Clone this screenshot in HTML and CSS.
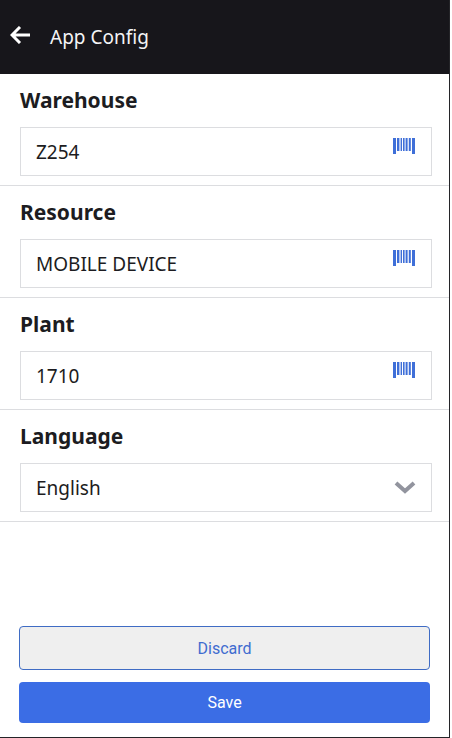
FILE: index.html
```html
<!DOCTYPE html>
<html lang="en">

<head>
    <meta charset="UTF-8">
    <meta name="viewport" content="width=device-width, initial-scale=1.0">
    <title>App Config</title>
    <link rel="stylesheet" href="styles.css">
</head>

<body>
    <div class="screen">
        <header class="topbar">
            <button class="icon-btn" type="button" aria-label="Back">
                <svg width="20" height="18" viewBox="0 0 20 18">
                    <path d="M20 9H2M10 1L2 9l8 8" />
                </svg>
            </button>
            <h1>App Config</h1>
        </header>

        <form class="config">
            <div class="field">
                <label for="warehouse">Warehouse</label>
                <div class="box">
                    <input id="warehouse" type="text" value="Z254">
                    <button class="icon-btn scan" type="button" aria-label="Scan warehouse">
                        <svg width="22" height="16" viewBox="0 0 22 16">
                            <path d="M0 0h3v16H0zM4 0h2.4v13H4zM7.6 0h1.4v13H7.6zM10 0h1.6v13H10zM12.6 0h2v13h-2zM15.8 0h2v13h-2zM19 0h3v16h-3z" />
                        </svg>
                    </button>
                </div>
            </div>

            <div class="field">
                <label for="resource">Resource</label>
                <div class="box">
                    <input id="resource" type="text" value="MOBILE DEVICE">
                    <button class="icon-btn scan" type="button" aria-label="Scan resource">
                        <svg width="22" height="16" viewBox="0 0 22 16">
                            <path d="M0 0h3v16H0zM4 0h2.4v13H4zM7.6 0h1.4v13H7.6zM10 0h1.6v13H10zM12.6 0h2v13h-2zM15.8 0h2v13h-2zM19 0h3v16h-3z" />
                        </svg>
                    </button>
                </div>
            </div>

            <div class="field">
                <label for="plant">Plant</label>
                <div class="box">
                    <input id="plant" type="text" value="1710">
                    <button class="icon-btn scan" type="button" aria-label="Scan plant">
                        <svg width="22" height="16" viewBox="0 0 22 16">
                            <path d="M0 0h3v16H0zM4 0h2.4v13H4zM7.6 0h1.4v13H7.6zM10 0h1.6v13H10zM12.6 0h2v13h-2zM15.8 0h2v13h-2zM19 0h3v16h-3z" />
                        </svg>
                    </button>
                </div>
            </div>

            <div class="field">
                <label for="language">Language</label>
                <div class="box select-box">
                    <select id="language">
                        <option>English</option>
                    </select>
                    <svg class="chevron" width="20" height="12" viewBox="0 0 20 12">
                        <path d="M1 1l9 8 9-8" />
                    </svg>
                </div>
            </div>

            <div class="actions">
                <button class="btn discard" type="button">Discard</button>
                <button class="btn save" type="submit">Save</button>
            </div>
        </form>
    </div>
</body>

</html>
```

FILE: styles.css
```css
* {
    box-sizing: border-box;
}

body {
    margin: 0;
    background-color: #fff;
    color: #1c1c21;
    font-family: "Noto Sans", sans-serif;
}

.screen {
    display: flex;
    flex-direction: column;
    min-height: 100vh;
    margin-right: 2px;
    border-right: 1px solid #242428;
    border-bottom: 1px solid #242428;
}

.topbar {
    display: flex;
    align-items: center;
    gap: 20px;
    height: 74px;
    padding: 0 10px;
    background-color: #17161b;
    color: #f4f4f6;
}

.topbar h1 {
    margin: 0;
    font-size: 19px;
    font-weight: 400;
}

.topbar svg {
    fill: none;
    stroke: #fff;
    stroke-width: 3;
}

.icon-btn {
    display: flex;
    padding: 0;
    border: 0;
    background: none;
    cursor: pointer;
}

.topbar .icon-btn {
    padding-bottom: 5px;
}

.config {
    display: flex;
    flex: 1;
    flex-direction: column;
}

.field {
    padding: 11px 17px 9px 20px;
    border-bottom: 1px solid #dcdde0;
}

.field label {
    display: block;
    margin-bottom: 12px;
    font-size: 21px;
    font-weight: 700;
    line-height: 30px;
}

.box {
    display: flex;
    height: 49px;
    border: 1px solid #dcdde0;
}

.box input,
.box select {
    flex: 1;
    min-width: 0;
    padding: 0 15px;
    border: 0;
    outline: 0;
    background: none;
    color: inherit;
    font: inherit;
    font-size: 19px;
    appearance: none;
}

.scan {
    padding: 10px 16px 0 0;
}

.scan svg {
    fill: #3f6fd8;
}

/* the arrow shares the select's cell so the whole box stays clickable */
.select-box {
    display: grid;
}

.select-box > * {
    grid-area: 1 / 1;
}

.chevron {
    align-self: center;
    justify-self: end;
    margin-right: 16px;
    overflow: visible;
    fill: none;
    stroke: #92949e;
    stroke-width: 4;
    pointer-events: none;
}

.actions {
    display: flex;
    flex-direction: column;
    gap: 12px;
    margin-top: auto;
    padding: 20px 19px 14px;
}

.btn {
    height: 41px;
    border: 0;
    border-radius: 4px;
    font-family: Roboto, sans-serif;
    font-size: 16px;
    cursor: pointer;
}

.discard {
    height: 44px;
    border: 1px solid #3f6cc4;
    background-color: #efefef;
    color: #3f6cd0;
}

.save {
    background-color: #3b6de5;
    color: #fff;
}
```
